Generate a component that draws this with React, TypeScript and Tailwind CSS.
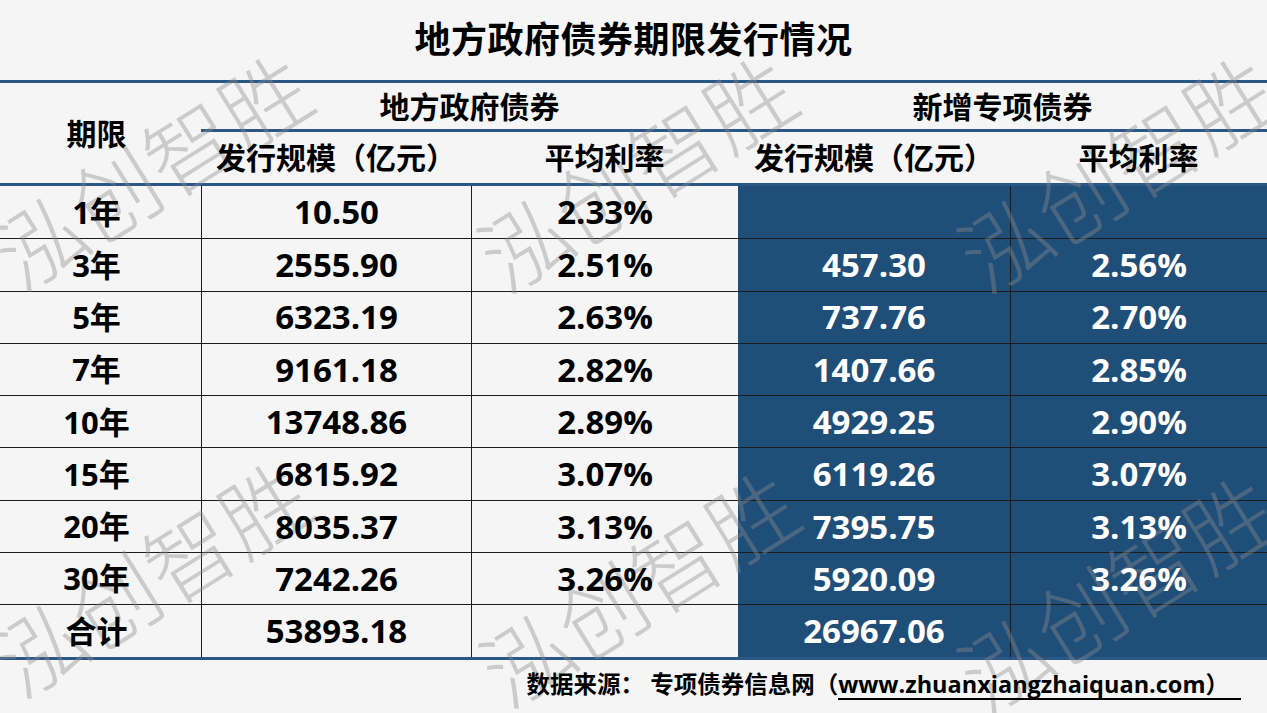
const rows: [string, string, string, string, string][] = [
  ["1年", "10.50", "2.33%", "", ""],
  ["3年", "2555.90", "2.51%", "457.30", "2.56%"],
  ["5年", "6323.19", "2.63%", "737.76", "2.70%"],
  ["7年", "9161.18", "2.82%", "1407.66", "2.85%"],
  ["10年", "13748.86", "2.89%", "4929.25", "2.90%"],
  ["15年", "6815.92", "3.07%", "6119.26", "3.07%"],
  ["20年", "8035.37", "3.13%", "7395.75", "3.13%"],
  ["30年", "7242.26", "3.26%", "5920.09", "3.26%"],
  ["合计", "53893.18", "", "26967.06", ""],
];

// watermark centres
const marks = [
  { x: 150, y: 168 },
  { x: 635, y: 170 },
  { x: 1115, y: 170 },
  { x: 150, y: 575 },
  { x: 637, y: 585 },
  { x: 1115, y: 590 },
];

const cols = "grid grid-cols-[201px_270px_267px_272px_257px]";

export default function App() {
  return (
    <div
      className="relative w-[1267px] h-[713px] overflow-hidden bg-[#f5f5f5] text-black"
      style={{ fontFamily: '"Open Sans", "Noto Sans CJK SC", sans-serif' }}
    >
      <div className="h-[80px] flex items-center justify-center">
        <h1 className="relative z-[2] text-[36px] font-bold tracking-[0.5px]">
          地方政府债券期限发行情况
        </h1>
      </div>

      <div className="border-t-[3px] border-[#2b5786]">
        {/* header */}
        <div className={`${cols} grid-rows-[49px_51px] border-b-[3px] border-[#2b5786] font-bold text-[30px]`}>
          <div className="row-span-2 flex items-center justify-center pr-[8px]">
            <span className="relative z-[2]">期限</span>
          </div>
          <div className="col-span-2 flex items-center justify-center border-b-[3px] border-[#2b5786]">
            <span className="relative z-[2]">地方政府债券</span>
          </div>
          <div className="col-span-2 flex items-center justify-center border-b-[3px] border-[#2b5786]">
            <span className="relative z-[2]">新增专项债券</span>
          </div>
          <div className="flex items-center justify-center">
            <span className="relative z-[2]">发行规模（亿元）</span>
          </div>
          <div className="flex items-center justify-center">
            <span className="relative z-[2]">平均利率</span>
          </div>
          <div className="flex items-center justify-center">
            <span className="relative z-[2]">发行规模（亿元）</span>
          </div>
          <div className="flex items-center justify-center">
            <span className="relative z-[2]">平均利率</span>
          </div>
        </div>

        {/* body */}
        <div className="border-b-[3px] border-[#2b5786] font-bold">
          {rows.map((r, i) => (
            <div
              key={r[0]}
              className={`${cols} h-[52.3px] ${i > 0 ? "border-t-[1.5px] border-[#1c1c1c]" : ""}`}
            >
              <div className="flex items-center justify-center pr-[8px] text-[31px]">
                <span className="relative z-[2]">{r[0]}</span>
              </div>
              <div className="flex items-center justify-center border-l-[1.5px] border-[#1c1c1c] text-[33px]">
                <span className="relative z-[2]">{r[1]}</span>
              </div>
              <div className="flex items-center justify-center border-l-[1.5px] border-[#1c1c1c] text-[33px]">
                <span className="relative z-[2]">{r[2]}</span>
              </div>
              <div className="flex items-center justify-center bg-[#1f4e79] text-white text-[33px]">
                <span className="relative z-[2]">{r[3]}</span>
              </div>
              <div className="flex items-center justify-center bg-[#1f4e79] border-l-[1.5px] border-[#1c1c1c] text-white text-[33px]">
                <span className="relative z-[2]">{r[4]}</span>
              </div>
            </div>
          ))}
        </div>
      </div>

      <div className="h-[52px] flex items-center justify-end pr-[40px] pt-[2px]">
        <p className="relative z-[2] text-[23.5px] font-bold leading-none">
          数据来源： 专项债券信息网（
          <span className="inline-block border-b-2 border-black pb-[2px] pr-[12px] -mr-[14px]">
            www.zhuanxiangzhaiquan.com）
          </span>
        </p>
      </div>

      {/* watermark */}
      <div className="pointer-events-none absolute inset-0 z-[1]">
        {marks.map((m, i) => (
          <div
            key={i}
            className="absolute -translate-x-1/2 -translate-y-1/2 -rotate-[32deg] whitespace-nowrap text-[88px] font-light leading-none text-[#8c8c8c66]"
            style={{ left: m.x, top: m.y, fontFamily: '"Noto Sans CJK SC", sans-serif' }}
          >
            泓创智胜
          </div>
        ))}
      </div>
    </div>
  );
}
